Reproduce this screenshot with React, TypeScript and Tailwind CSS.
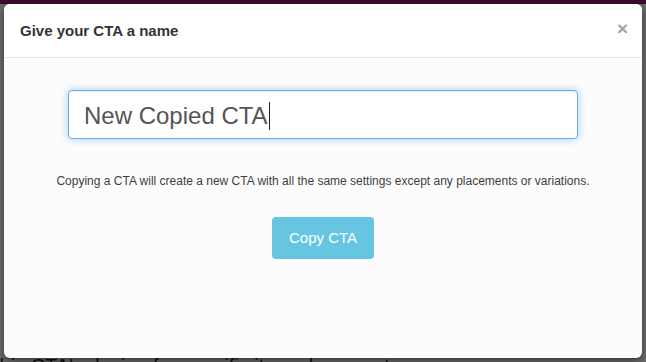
export default function App() {
  return (
    <div className="relative w-[646px] h-[362px] overflow-hidden bg-[#6c6c6c] font-['Liberation_Sans',Arial,sans-serif]">
      <div className="h-[4px] bg-[#3d0b2c]" />
      <div className="pt-[351px] -ml-[6px] text-[20px] leading-[22px] text-[#111] whitespace-nowrap">
        this CTA&apos;s design for specific item placements
      </div>

      <div className="absolute left-[4px] top-[4px] w-[638px] h-[354px] rounded-[6px] bg-[#fcfcfc] flex flex-col overflow-hidden shadow-[0_3px_9px_rgba(0,0,0,0.5)]">
        <div className="h-[54px] shrink-0 bg-white border-b border-[#e5e5e5] flex items-center justify-between pl-[16px] pr-[14px]">
          <h4 className="text-[15px] font-bold text-[#333] pt-[1px]">Give your CTA a name</h4>
          <span className="text-[19px] font-bold leading-none text-[#a3a3a3] -mt-[4px]">×</span>
        </div>

        <div className="flex flex-col items-center pt-[32px]">
          <div className="w-[510px] h-[49px] bg-white border border-[#66afe9] rounded-[4px] shadow-[inset_0_1px_1px_rgba(0,0,0,0.075),0_0_8px_rgba(102,175,233,0.6)] flex items-center pl-[15px] pt-[3px] text-[24px] text-[#555]">
            <span>New Copied CTA</span>
            <span className="ml-[1px] w-[1px] h-[28px] bg-[#222]" />
          </div>

          <p className="mt-[34px] text-[12px] leading-[16px] text-[#3e3e3e]">
            Copying a CTA will create a new CTA with all the same settings except any placements or variations.
          </p>

          <button className="mt-[28px] w-[102px] h-[42px] rounded-[4px] bg-[#66c6e2] text-white text-[15px]">
            Copy CTA
          </button>
        </div>
      </div>
    </div>
  );
}
